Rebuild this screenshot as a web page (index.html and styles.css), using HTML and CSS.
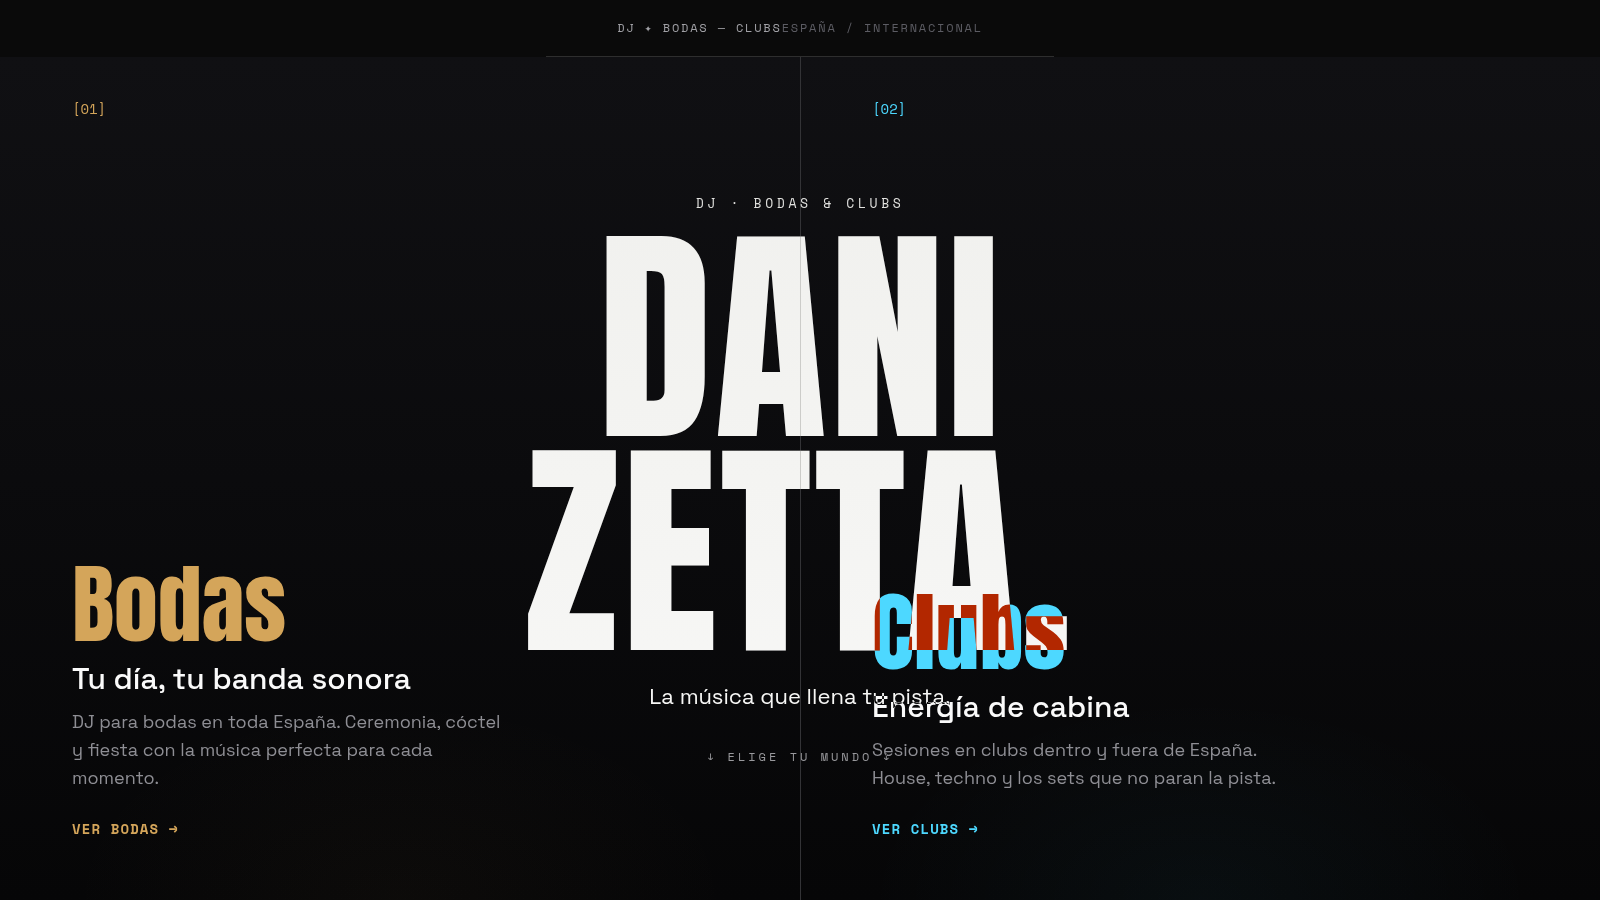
FILE: index.html
```html
<!doctype html>
<html lang="es">
    <head>
        <meta charset="utf-8">
        <meta name="viewport" content="width=device-width, initial-scale=1.0">
        <title>Dani Zetta</title>
        <link rel="stylesheet" href="styles.css">
    </head>
    <body>
    <header class="topbar">
        <span class="topbar-main">DJ ✦ BODAS — CLUBS</span><span class="topbar-sub">ESPAÑA / INTERNACIONAL</span>
    </header>

    <main class="hero">
        <section class="side side-bodas">
            <span class="num">[01]</span>
            <div class="side-body">
                <h2 class="name">Bodas</h2>
                <h3 class="lead">Tu día, tu banda sonora</h3>
                <p class="text">DJ para bodas en toda España. Ceremonia, cóctel y fiesta con la música perfecta para cada momento.</p>
                <a class="more" href="#bodas">VER BODAS →</a>
            </div>
        </section>

        <section class="side side-clubs">
            <span class="num">[02]</span>
            <div class="side-body">
                <h2 class="name">Clubs</h2>
                <h3 class="lead">Energía de cabina</h3>
                <p class="text">Sesiones en clubs dentro y fuera de España. House, techno y los sets que no paran la pista.</p>
                <a class="more" href="#clubs">VER CLUBS →</a>
            </div>
        </section>

        <!-- title over both halves -->
        <div class="center">
            <p class="eyebrow">DJ · BODAS &amp; CLUBS</p>
            <h1 class="title">DANI<br>ZETTA.</h1>
            <p class="tagline">La música que llena tu pista.</p>
            <p class="hint">↓ ELIGE TU MUNDO ↓</p>
        </div>
    </main>
    </body>
</html>
```
FILE: styles.css
```css
* {
    box-sizing: border-box;
}
body {
    margin: 0;
    min-height: 100vh;
    display: flex;
    flex-direction: column;
    background: #0a0a0a;
    color: #fafafa;
    font-family: "Space Grotesk", "Inter", sans-serif;
}
h1, h2, h3, p {
    margin: 0;
}

.topbar {
    align-self: center;
    padding: 19px 71px;
    border-bottom: 1px solid #2e2e2e;
    font-family: "Space Mono", "Liberation Mono", monospace;
    font-size: 12px;
    line-height: 18px;
    letter-spacing: 0.15em;
}
.topbar-main {
    color: #a1a1a6;
}
.topbar-sub {
    color: #5c5c63;
}

.hero {
    position: relative;
    flex: 1;
    display: grid;
    grid-template-columns: 1fr 1fr;
    background: linear-gradient(#101013, #060607);
}
.hero::before {
    content: "";
    position: absolute;
    top: 0;
    bottom: 0;
    left: 50%;
    width: 1px;
    background: #333336;
}
.side {
    display: flex;
    flex-direction: column;
    justify-content: space-between;
    padding: 41px 72px 60px;
}
.side-bodas {
    --accent: #d4a55a;
    background: radial-gradient(42% 24% at 50% 100%, rgba(212, 165, 90, 0.03), transparent);
}
.side-clubs {
    --accent: #4dd8ff;
    background: radial-gradient(42% 24% at 50% 100%, rgba(77, 216, 255, 0.04), transparent);
}
.num {
    color: var(--accent);
    font-family: "Space Mono", "Liberation Mono", monospace;
    font-size: 14px;
    line-height: 22px;
}
.name {
    color: var(--accent);
    font-family: "Anton", "Roboto Condensed", sans-serif;
    font-size: 88px;
    font-weight: 400;
    line-height: 80px;
}
.lead {
    margin-top: 16px;
    font-size: 30px;
    font-weight: 500;
    line-height: 38px;
}
.text {
    max-width: 432px;
    margin-top: 10px;
    color: #8e8e94;
    font-size: 18px;
    line-height: 28px;
}
.more {
    display: inline-block;
    margin-top: 26px;
    color: var(--accent);
    font-family: "Space Mono", "Liberation Mono", monospace;
    font-size: 14px;
    font-weight: 700;
    line-height: 22px;
    letter-spacing: 0.08em;
    text-decoration: none;
}

.center {
    position: absolute;
    inset: 0;
    display: flex;
    flex-direction: column;
    align-items: center;
    justify-content: center;
    padding-top: 2px;
    color: #fff;
    text-align: center;
    mix-blend-mode: difference;
    pointer-events: none;
}
.eyebrow {
    color: #f0f0f0;
    font-family: "Space Mono", "Liberation Mono", monospace;
    font-size: 13px;
    line-height: 20px;
    letter-spacing: 0.28em;
}
.title {
    margin-top: 18px;
    font-family: "Anton", "Roboto Condensed", sans-serif;
    font-size: clamp(72px, 14.5vw, 232px);
    font-weight: 400;
    line-height: 0.92;
    letter-spacing: 0.01em;
}
.tagline {
    margin-top: 20px;
    font-size: 22px;
    line-height: 36px;
}
.hint {
    margin-top: 34px;
    color: #a1a1a6;
    font-family: "Space Mono", "Liberation Mono", monospace;
    font-size: 12px;
    line-height: 18px;
    letter-spacing: 0.25em;
}
```
